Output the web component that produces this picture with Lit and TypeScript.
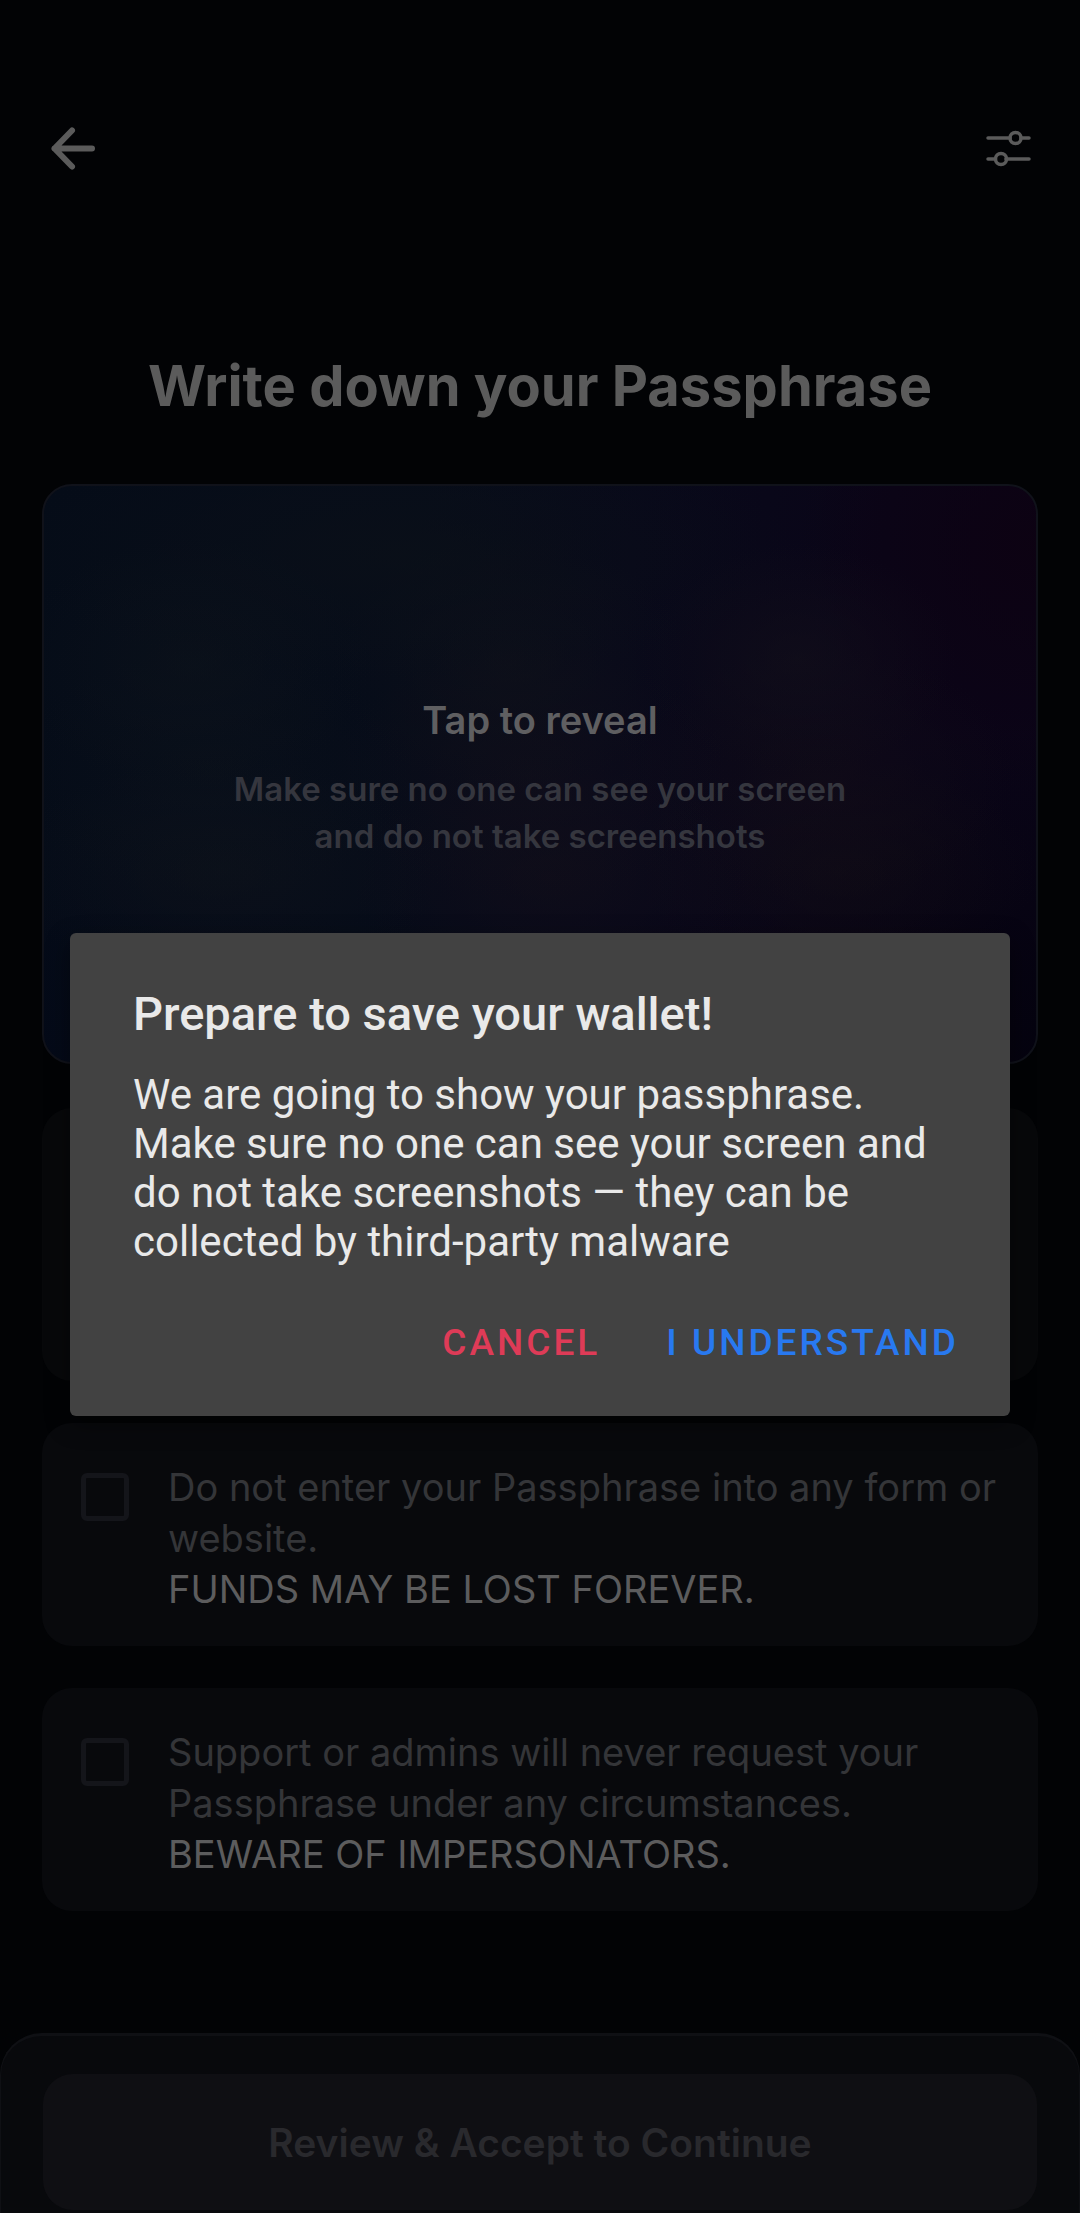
import { LitElement, html, css } from "lit";
import { customElement, property } from "lit/decorators.js";

/** A tickable warning the user has to accept before continuing. */
@customElement("ack-card")
export class AckCard extends LitElement {
  @property() text = "";
  @property() warning = "";

  static styles = css`
    :host {
      display: block;
    }
    .card {
      display: flex;
      gap: 39px;
      padding: 39px 40px 31px 39px;
      border-radius: 30px;
      background: #08090c;
      font-size: 38px;
      line-height: 51px;
      color: #343538;
    }
    .box {
      appearance: none;
      box-sizing: border-box;
      flex: none;
      width: 48px;
      height: 48px;
      margin: 11px 0 0;
      border: 5px solid #14151a;
      border-radius: 6px;
      background: transparent;
    }
    .box:checked {
      background: #5a5a5a;
    }
    .copy {
      flex: 1;
    }
    .warning {
      display: block;
      color: #5c5c5d;
    }
  `;

  render() {
    return html`
      <label class="card">
        <input class="box" type="checkbox" />
        <span class="copy">${this.text}<span class="warning">${this.warning}</span></span>
      </label>
    `;
  }
}

@customElement("app-root")
export class AppRoot extends LitElement {
  static styles = css`
    :host {
      display: block;
      font-family: Inter, "Liberation Sans", Arial, sans-serif;
      color: #5b5b5b;
    }
    .screen {
      position: relative;
      box-sizing: border-box;
      min-height: 100vh;
      display: flex;
      flex-direction: column;
      background: #020305;
    }
    .header {
      display: flex;
      justify-content: space-between;
      padding: 111px 36px 0;
    }
    .icon-button {
      display: grid;
      place-items: center;
      width: 75px;
      height: 75px;
      padding: 0;
      border: 0;
      background: none;
      color: inherit;
    }
    .icon {
      width: 48px;
      height: 48px;
      fill: none;
      stroke: currentColor;
      stroke-linecap: round;
      stroke-linejoin: round;
    }
    .content {
      display: flex;
      flex-direction: column;
      padding: 0 42px;
    }
    .title {
      margin: 168px 0 66px;
      font-size: 56px;
      line-height: 64px;
      font-weight: 700;
      text-align: center;
    }
    .reveal {
      box-sizing: border-box;
      min-height: 580px;
      display: flex;
      flex-direction: column;
      align-items: center;
      justify-content: center;
      gap: 20px;
      padding: 6px 120px 0;
      border: 2px solid #10121a;
      border-radius: 30px;
      font: inherit;
      font-weight: 600;
      color: inherit;
      background:
        radial-gradient(ellipse 40% 22% at 36% 12%, rgba(12, 17, 24, 0.6) 0%, rgba(12, 17, 24, 0) 100%),
        radial-gradient(ellipse 18% 22% at 15% 31%, rgba(13, 19, 27, 0.6) 0%, rgba(13, 19, 27, 0) 100%),
        radial-gradient(ellipse 18% 22% at 47% 31%, rgba(16, 18, 26, 0.6) 0%, rgba(16, 18, 26, 0) 100%),
        radial-gradient(ellipse 16% 20% at 76% 30%, rgba(19, 16, 26, 0.6) 0%, rgba(19, 16, 26, 0) 100%),
        radial-gradient(ellipse 20% 22% at 17% 50%, rgba(12, 18, 27, 0.5) 0%, rgba(12, 18, 27, 0) 100%),
        radial-gradient(ellipse 20% 22% at 49% 50%, rgba(18, 15, 26, 0.6) 0%, rgba(18, 15, 26, 0) 100%),
        radial-gradient(ellipse 20% 22% at 78% 50%, rgba(18, 13, 23, 0.6) 0%, rgba(18, 13, 23, 0) 100%),
        radial-gradient(ellipse 22% 20% at 18% 67%, rgba(15, 19, 27, 0.6) 0%, rgba(15, 19, 27, 0) 100%),
        radial-gradient(ellipse 20% 20% at 51% 68%, rgba(19, 15, 25, 0.6) 0%, rgba(19, 15, 25, 0) 100%),
        radial-gradient(ellipse 20% 20% at 80% 67%, rgba(18, 14, 22, 0.6) 0%, rgba(18, 14, 22, 0) 100%),
        radial-gradient(ellipse 24% 44% at 100% 10%, rgba(13, 2, 18, 0.9) 0%, rgba(13, 2, 18, 0) 100%),
        radial-gradient(ellipse 40% 40% at 0% 100%, rgba(4, 9, 24, 0.7) 0%, rgba(4, 9, 24, 0) 100%),
        radial-gradient(ellipse 36% 60% at 100% 100%, rgba(4, 3, 14, 0.9) 0%, rgba(4, 3, 14, 0) 100%),
        linear-gradient(100deg, #050c18 0%, #060c19 35%, #08091a 55%, #0a0518 78%, #0a0418 100%);
    }
    .reveal-title {
      font-size: 38px;
      line-height: 51px;
      color: #5f5f61;
    }
    .reveal-note {
      font-size: 33px;
      line-height: 47px;
      color: #35363e;
    }
    .notices {
      display: grid;
      gap: 42px;
      margin-top: 44px;
    }
    .covered {
      min-height: 273px;
      border-radius: 30px;
      background: #07080a;
    }
    .footer {
      margin-top: auto;
      padding: 38px 42px 3px;
      border: 1px solid #0f1014;
      border-top-width: 3px;
      border-bottom: 0;
      border-radius: 42px 42px 0 0;
      background: #08090c;
    }
    .accept {
      width: 100%;
      min-height: 136px;
      border: 0;
      border-radius: 30px;
      background: #0f0f13;
      color: #29292d;
      font: inherit;
      font-size: 39px;
      font-weight: 600;
    }
    .scrim {
      position: absolute;
      inset: 0;
      display: flex;
      flex-direction: column;
      justify-content: center;
      padding: 136px 70px 0;
      font-family: Roboto, sans-serif;
    }
    .dialog {
      padding: 53px 30px 24px 63px;
      border-radius: 6px;
      background: #424242;
      box-shadow: 0 8px 24px rgba(0, 0, 0, 0.4);
      color: #e9e9e9;
    }
    .dialog-title {
      margin: 0 0 28px;
      font-size: 47px;
      line-height: 56px;
      font-weight: 500;
    }
    .dialog-text {
      margin: 0 24px 26px 0;
      font-size: 42px;
      line-height: 49px;
    }
    .actions {
      display: flex;
      justify-content: flex-end;
      gap: 24px;
    }
    .action {
      min-height: 100px;
      padding: 0 21px;
      border: 0;
      background: none;
      font: inherit;
      font-size: 37px;
      font-weight: 500;
      letter-spacing: 3px;
      text-transform: uppercase;
    }
    .cancel {
      color: #de3b57;
    }
    .confirm {
      color: #2879f0;
    }
  `;

  render() {
    return html`
      <div class="screen">
        <header class="header">
          <button class="icon-button" aria-label="Back">
            <svg class="icon" viewBox="0 0 48 48" stroke-width="6">
              <path d="M42 23.500H4.500M22 5.500L4.500 23.500L22 41.500" />
            </svg>
          </button>
          <button class="icon-button" aria-label="Options">
            <svg class="icon" viewBox="0 0 48 48" stroke-width="3.500">
              <path d="M5 13H27M38 13H46M5 34H12M23 34H46" />
              <circle cx="32.500" cy="13" r="5.500" />
              <circle cx="18" cy="34" r="5.500" />
            </svg>
          </button>
        </header>
        <main class="content">
          <h1 class="title">Write down your Passphrase</h1>
          <button class="reveal">
            <span class="reveal-title">Tap to reveal</span>
            <span class="reveal-note">Make sure no one can see your screen<br />and do not take screenshots</span>
          </button>
          <div class="notices">
            <div class="covered"></div>
            <ack-card
              text="Do not enter your Passphrase into any form or website."
              warning="FUNDS MAY BE LOST FOREVER."
            ></ack-card>
            <ack-card
              text="Support or admins will never request your Passphrase under any circumstances."
              warning="BEWARE OF IMPERSONATORS."
            ></ack-card>
          </div>
        </main>
        <footer class="footer">
          <button class="accept">Review &amp; Accept to Continue</button>
        </footer>
        <div class="scrim">
          <section class="dialog" role="alertdialog" aria-modal="true" aria-labelledby="dialog-title">
            <h2 class="dialog-title" id="dialog-title">Prepare to save your wallet!</h2>
            <p class="dialog-text">
              We are going to show your passphrase. Make sure no one can see your screen and do not take
              screenshots — they can be collected by third-party malware
            </p>
            <div class="actions">
              <button class="action cancel">Cancel</button>
              <button class="action confirm">I understand</button>
            </div>
          </section>
        </div>
      </div>
    `;
  }
}
